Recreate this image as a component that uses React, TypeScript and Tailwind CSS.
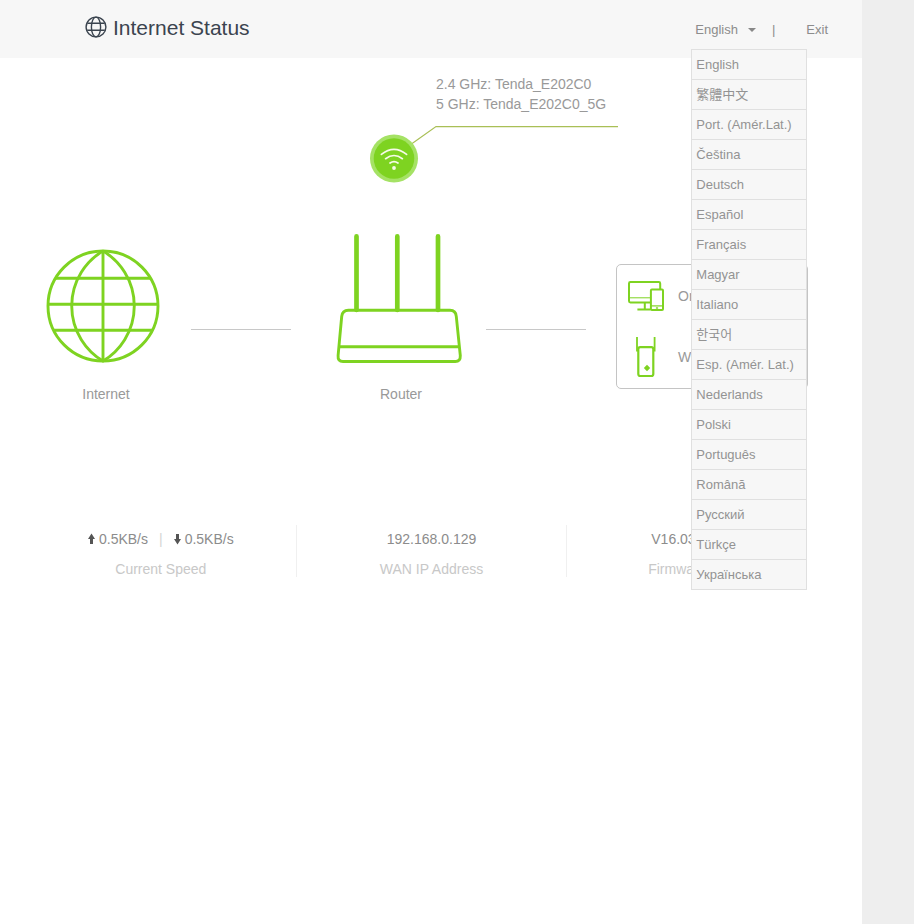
import { useState } from "react";

interface Stat {
  value: string;
  label: string;
}

const languages: string[] = [
  "English",
  "繁體中文",
  "Port. (Amér.Lat.)",
  "Čeština",
  "Deutsch",
  "Español",
  "Français",
  "Magyar",
  "Italiano",
  "한국어",
  "Esp. (Amér. Lat.)",
  "Nederlands",
  "Polski",
  "Português",
  "Română",
  "Русский",
  "Türkçe",
  "Українська",
];

const stats: Stat[] = [
  { value: "192.168.0.129", label: "WAN IP Address" },
  { value: "V16.03.34.09.01", label: "Firmware Version" },
];

function TitleGlobe() {
  return (
    <svg width="22" height="26" viewBox="0 0 22 26" fill="none" stroke="#3b444f" strokeWidth="1.4" aria-hidden="true">
      <circle cx="11" cy="12" r="9.9" />
      <path d="M2.4 8.2h17.2M2.2 15.2h17.6" />
      <ellipse cx="11" cy="12" rx="4.6" ry="9.9" />
    </svg>
  );
}

function InternetIcon() {
  return (
    <svg width="120" height="130" viewBox="0 0 120 130" fill="none" stroke="#7ed321" strokeWidth="2.9" aria-hidden="true">
      <circle cx="57" cy="72" r="55" />
      <path d="M57 17v110M10 44.3h94M2 70.3h110M8 96.3h98" />
      <path d="M57 17a64 64 0 0 0 0 110a64 64 0 0 0 0-110" />
    </svg>
  );
}

function RouterIcon() {
  return (
    <svg width="130" height="130" viewBox="0 0 130 130" fill="none" stroke="#7ed321" strokeWidth="2.9" aria-hidden="true">
      <path d="M20.5 2.4V76M61.3 2.4V76M102 2.4V76" strokeWidth="4.7" strokeLinecap="round" />
      <path d="M12.4 76.3h101.6q5.8 0 6.3 6.2l4 39q.3 6-5 6H7q-5.4 0-4.9-6l3.6-39q.7-6.2 6.7-6.2z" />
      <path d="M3 112.7h120.4" />
    </svg>
  );
}

function DevicesIcon() {
  return (
    <svg width="36" height="32" viewBox="0 0 36 32" fill="none" stroke="#7ed321" strokeWidth="2" aria-hidden="true">
      <path d="M22 22.4H2.4Q1 22.4 1 21V3.4Q1 2 2.4 2h28.4q1.4 0 1.4 1.4V9" />
      <path d="M1 17.8h21" strokeWidth="1" />
      <path d="M16.8 22.4v7M9.4 29.4h13" />
      <rect x="22.9" y="9.6" width="12.1" height="20.5" rx="1" />
      <path d="M23 25.9h12" strokeWidth="1.2" />
      <path d="M27.9 28h2.2" strokeWidth="1.4" />
    </svg>
  );
}

function ExtenderIcon() {
  return (
    <svg width="36" height="42" viewBox="0 0 36 42" fill="none" stroke="#7ed321" strokeWidth="2" aria-hidden="true">
      <path d="M9 1v14.5M26.6 1v14.5" strokeWidth="1.8" />
      <rect x="10.3" y="11.2" width="15" height="28.8" rx="2" strokeWidth="2.2" />
      <path d="M19 28.8l3.2 3.2l-3.2 3.2l-3.2-3.2z" fill="#7ed321" stroke="none" />
    </svg>
  );
}

function WifiCallout() {
  return (
    <svg width="248" height="58" viewBox="0 0 248 58" fill="none" aria-hidden="true">
      <path d="M40 19L66 .6H248" stroke="#a9bf56" strokeWidth="1.2" />
      <circle cx="24" cy="32.5" r="24" fill="#a5e265" />
      <circle cx="24" cy="32.5" r="20.3" fill="#7ed321" />
      <g stroke="#f6fbe9" strokeWidth="1.7" strokeLinecap="round">
        <path d="M11.4 28.4q12.6-10 25.2 0" />
        <path d="M15.6 32.7q8.4-6.4 16.8 0" />
        <path d="M20 37q4-2.8 8 0" />
      </g>
      <circle cx="24" cy="42" r="1.9" fill="#f6fbe9" />
    </svg>
  );
}

function SpeedArrow({ down = false }: { down?: boolean }) {
  return (
    <svg width="7" height="12" viewBox="0 0 7 12" fill="#555" aria-hidden="true">
      {down ? (
        <path d="M2 1h3v5h2L3.5 11.4L0 6h2z" />
      ) : (
        <path d="M3.5.6L7 6H5v5H2V6H0z" />
      )}
    </svg>
  );
}

function LanguageMenu() {
  const [open, setOpen] = useState(true);
  const [language, setLanguage] = useState("English");

  return (
    <div className="relative">
      <button
        type="button"
        aria-expanded={open}
        onClick={() => setOpen(!open)}
        className="flex items-center gap-[10px] leading-5"
      >
        {language}
        <svg width="8" height="4" viewBox="0 0 8 4" fill="#888" aria-hidden="true">
          <path d="M0 0h8L4 4z" />
        </svg>
      </button>
      {open && (
        <ul className="absolute top-[29px] -left-1 z-10 w-[116px] border border-[#e0e0e0] bg-[#f7f7f7] divide-y divide-[#e0e0e0] text-[#939393]">
          {languages.map((name) => (
            <li key={name}>
              <button
                type="button"
                onClick={() => {
                  setLanguage(name);
                  setOpen(false);
                }}
                className="block w-full px-1 py-1 text-left leading-[21px] whitespace-nowrap hover:bg-[#eee]"
              >
                {name}
              </button>
            </li>
          ))}
        </ul>
      )}
    </div>
  );
}

export default function App() {
  return (
    <div className="flex min-h-screen bg-[#eee] font-['Liberation_Sans','Noto_Sans_CJK_TC','Noto_Sans_CJK_KR',sans-serif] text-sm text-[#999]">
      <div className="mr-[52px] flex-1 bg-white">
        <header className="flex h-[58px] items-center justify-between bg-[#f7f7f7] pr-[34px] pl-[85px]">
          <h1 className="flex items-center gap-[6px] pb-[2px] text-[21px] leading-7 text-[#3b444f]">
            <TitleGlobe />
            Internet Status
          </h1>
          <div className="flex items-center pt-[2px] text-[13px] leading-5 text-[#8c8c8c]">
            <LanguageMenu />
            <span className="mr-[31px] ml-4">|</span>
            <a href="#exit">Exit</a>
          </div>
        </header>

        <main>
          <section className="pt-4 pl-[370px]">
            <div className="pl-[66px] leading-5">
              <p>2.4 GHz: Tenda_E202C0</p>
              <p>5 GHz: Tenda_E202C0_5G</p>
            </div>
            <div className="mt-3">
              <WifiCallout />
            </div>
          </section>

          {/* Topology */}
          <section className="mt-[50px] flex items-start pr-[54px] pl-[21px] leading-5">
            <div className="flex w-[170px] flex-col items-center gap-5">
              <InternetIcon />
              <p>Internet</p>
            </div>
            <div className="mt-[95px] grow basis-[125px] pr-[25px]">
              <div className="h-px bg-[#c8c8c8]" />
            </div>
            <div className="flex w-[170px] flex-col items-center gap-5">
              <RouterIcon />
              <p>Router</p>
            </div>
            <div className="mt-[95px] grow basis-[130px] pr-[30px]">
              <div className="h-px bg-[#c8c8c8]" />
            </div>
            <div className="mt-[30px] flex w-48 flex-col gap-6 rounded-[5px] border border-[#c4c4c4] px-[11px] pt-[15px] pb-[10px] whitespace-nowrap">
              <div className="flex items-center gap-[14px]">
                <DevicesIcon />
                <span>Online Device</span>
              </div>
              <div className="flex items-center gap-[14px]">
                <ExtenderIcon />
                <span>WiFi Extender</span>
              </div>
            </div>
          </section>

          {/* Status figures */}
          <section className="mt-[121px] grid grid-cols-3 divide-x divide-[#f0f0f0] pr-6 pl-[26px] text-center">
            <div className="pt-1">
              <div className="flex items-center justify-center gap-[11px] leading-5 text-[#8c8c8c]">
                <span className="flex items-center gap-1">
                  <SpeedArrow />
                  0.5KB/s
                </span>
                <span className="text-[#d4d4d4]">|</span>
                <span className="flex items-center gap-1">
                  <SpeedArrow down />
                  0.5KB/s
                </span>
              </div>
              <p className="mt-3 leading-4 text-[#c8c8c8]">Current Speed</p>
            </div>
            {stats.map((stat) => (
              <div key={stat.label} className="pt-1">
                <p className="leading-5 text-[#8c8c8c]">{stat.value}</p>
                <p className="mt-3 leading-4 text-[#c8c8c8]">{stat.label}</p>
              </div>
            ))}
          </section>
        </main>
      </div>
    </div>
  );
}
